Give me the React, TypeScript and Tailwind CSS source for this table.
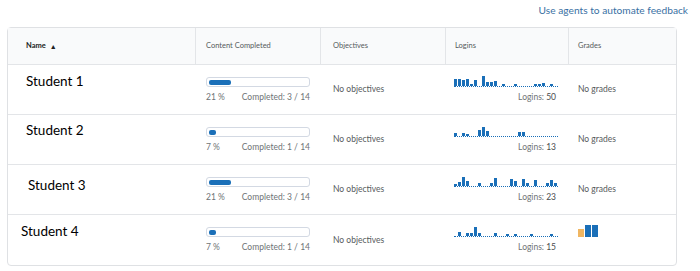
import React from "react";

const charts: number[][] = [
  [7,7,6,7,2,6,0,10,4,4,5,0,2,0,0,2,0,0,0,0,2,2,3,0,2,0],
  [3,0,3,2,0,0,6,9,5,0,0,0,0,0,0,0,4,4,0,0,0,0,0,0,0,0],
  [2,4,9,5,0,0,3,0,0,3,8,0,0,0,7,5,0,7,3,0,6,0,0,3,6,3],
  [0,4,0,3,3,9,3,0,0,0,3,0,0,2,0,2,0,0,0,2,0,0,0,0,2,0],
];

const rows = [
  { name: "Student 1", pct: 21, done: 3, logins: 50, nameCls: "pl-[18px] pt-[7px]" },
  { name: "Student 2", pct: 7, done: 1, logins: 13, nameCls: "pl-[18px] pt-[6px]" },
  { name: "Student 3", pct: 21, done: 3, logins: 23, nameCls: "pl-[20px] pt-[11px]" },
  { name: "Student 4", pct: 7, done: 1, logins: 15, nameCls: "pl-[13px] pt-[7px]" },
];

function Spark({ data }: { data: number[] }) {
  return (
    <div className="flex items-end gap-px h-[11px] border-b border-dotted border-[#1a6fb8] w-[104px]">
      {data.map((h, i) => (
        <div key={i} className="w-[3px] bg-[#1a6fb8]" style={{ height: h }} />
      ))}
    </div>
  );
}

export default function App() {
  return (
    <div className="w-[700px] h-[271px] bg-white overflow-hidden" style={{ fontFamily: "Lato, 'Open Sans', sans-serif" }}>
      <div className="flex justify-end pr-[12px] pt-[3px] h-[27px]">
        <span className="text-[10.2px] text-[#3a70a3]">Use agents to automate feedback</span>
      </div>
      <div className="ml-[7px] w-[670px] border border-[#dfe1e4] rounded-[4px]">
        <div className="flex h-[37px] bg-[#f9fafb] border-b border-[#e3e5e8] text-[7.5px] text-[#565a5c]">
          <div className="w-[188px] border-r border-[#e3e5e8] flex items-center pl-[18px] font-bold text-[#202122]">
            Name <span className="ml-[4px] text-[7px]">▲</span>
          </div>
          <div className="w-[125px] border-r border-[#e3e5e8] flex items-center pl-[10px]">Content Completed</div>
          <div className="w-[125px] border-r border-[#e3e5e8] flex items-center pl-[12px]">Objectives</div>
          <div className="w-[123px] border-r border-[#e3e5e8] flex items-center pl-[9px]">Logins</div>
          <div className="flex-1 flex items-center pl-[9px]">Grades</div>
        </div>
        {rows.map((r, idx) => (
          <div key={idx} className={`flex h-[50px] ${idx < 3 ? "border-b border-[#e3e5e8]" : ""}`}>
            <div className={`w-[188px] ${r.nameCls} text-[13.5px] leading-[18px] text-black`}>
              {r.name}
            </div>
            <div className="w-[125px] pl-[10px] pt-[12px]">
              <div className="w-[104px] h-[10px] border border-[#d3d9e3] rounded-[3px] p-[1.5px]">
                <div className="h-full bg-[#1a6fb8] rounded-[2px]" style={{ width: r.pct === 21 ? 22 : 7 }} />
              </div>
              <div className="flex justify-between w-[104px] mt-[4px] text-[8.5px] text-[#6e7376]">
                <span>{r.pct} %</span>
                <span>Completed: {r.done} / 14</span>
              </div>
            </div>
            <div className="w-[125px] pl-[12px] flex items-center text-[8.5px] text-[#565a5c]">No objectives</div>
            <div className="w-[123px] pl-[8px] pt-[11px]">
              <Spark data={charts[idx]} />
              <div className="w-[102px] text-right mt-[4px] text-[8.5px] text-[#6e7376]">
                Logins: <span className="text-[#494c4e]">{r.logins}</span>
              </div>
            </div>
            <div className="flex-1 pl-[9px]">
              {idx < 3 ? (
                <div className="h-full flex items-center text-[8.5px] text-[#565a5c]">No grades</div>
              ) : (
                <div className="flex items-end gap-px pt-[10px]">
                  <div className="w-[6px] h-[8px] bg-[#f0b662]" />
                  <div className="w-[6px] h-[12px] bg-[#1a6fb8]" />
                  <div className="w-[6px] h-[12px] bg-[#1a6fb8]" />
                </div>
              )}
            </div>
          </div>
        ))}
      </div>
    </div>
  );
}
